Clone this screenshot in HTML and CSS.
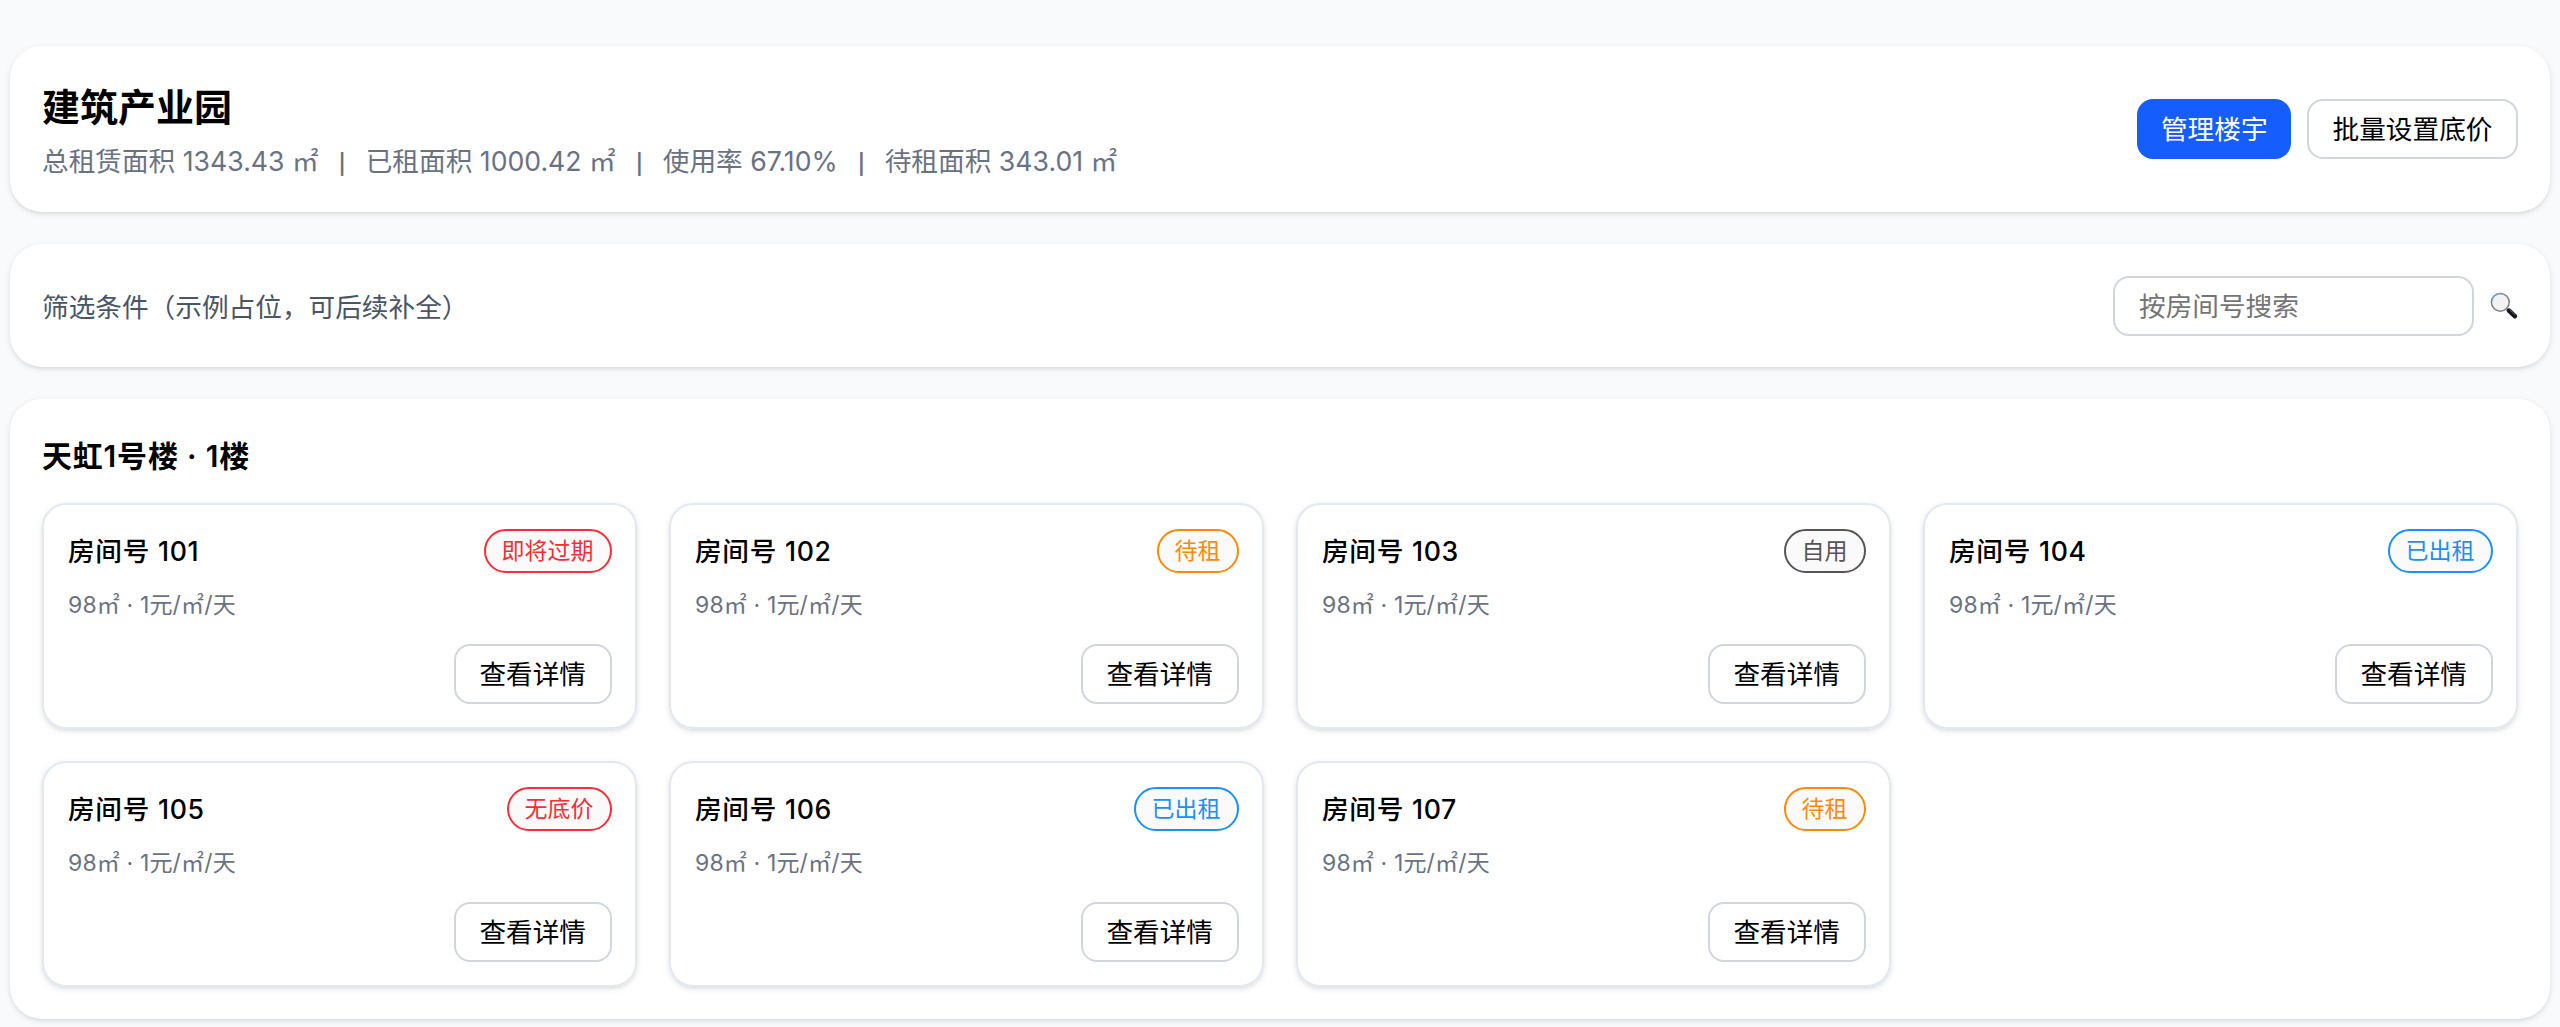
FILE: index.html
```html
<!DOCTYPE html>
<html lang="zh-CN">
<head>
  <meta charset="UTF-8">
  <meta name="viewport" content="width=device-width, initial-scale=1.0">
  <title>建筑产业园</title>
  <link rel="stylesheet" href="styles.css">
</head>
<body>
  <div class="page">

    <!-- 园区概览 -->
    <header class="panel summary">
      <div>
        <h1>建筑产业园</h1>
        <p class="stats">
          <span>总租赁面积 1343.43 ㎡</span><span class="sep">|</span><span>已租面积 1000.42 ㎡</span><span class="sep">|</span><span>使用率 67.10%</span><span class="sep">|</span><span>待租面积 343.01 ㎡</span>
        </p>
      </div>
      <div class="actions">
        <button class="btn primary">管理楼宇</button>
        <button class="btn">批量设置底价</button>
      </div>
    </header>

    <!-- 筛选 -->
    <section class="panel filter">
      <span class="filter-text">筛选条件（示例占位，可后续补全）</span>
      <div class="search">
        <input type="text" placeholder="按房间号搜索">
        <svg class="icon" viewBox="0 0 28 28">
          <path d="M17 17l3 3" stroke="#777" stroke-width="2.4"/>
          <path d="M19 18.6l5.8 5.6" stroke="#15191d" stroke-width="4.6" stroke-linecap="round"/>
          <path d="M19.6 17.6l5.8 5.4" stroke="#59626a" stroke-width="1"/>
          <circle cx="10.3" cy="10.3" r="8.9" fill="#f2f2f2" stroke="#7c8287" stroke-width="1.5"/>
          <path d="M1.9 8.5a8.8 8.8 0 0 1 8.4-7.1" fill="none" stroke="#79a5cc" stroke-width="1.3"/>
        </svg>
      </div>
    </section>

    <!-- 房间列表 -->
    <section class="panel floor">
      <h2>天虹1号楼 · 1楼</h2>
      <div class="rooms">
        <div class="room">
          <div class="room-head"><h3>房间号 101</h3><span class="tag red">即将过期</span></div>
          <p class="info">98㎡ · 1元/㎡/天</p>
          <button class="btn detail">查看详情</button>
        </div>
        <div class="room">
          <div class="room-head"><h3>房间号 102</h3><span class="tag orange">待租</span></div>
          <p class="info">98㎡ · 1元/㎡/天</p>
          <button class="btn detail">查看详情</button>
        </div>
        <div class="room">
          <div class="room-head"><h3>房间号 103</h3><span class="tag gray">自用</span></div>
          <p class="info">98㎡ · 1元/㎡/天</p>
          <button class="btn detail">查看详情</button>
        </div>
        <div class="room">
          <div class="room-head"><h3>房间号 104</h3><span class="tag blue">已出租</span></div>
          <p class="info">98㎡ · 1元/㎡/天</p>
          <button class="btn detail">查看详情</button>
        </div>
        <div class="room">
          <div class="room-head"><h3>房间号 105</h3><span class="tag red">无底价</span></div>
          <p class="info">98㎡ · 1元/㎡/天</p>
          <button class="btn detail">查看详情</button>
        </div>
        <div class="room">
          <div class="room-head"><h3>房间号 106</h3><span class="tag blue">已出租</span></div>
          <p class="info">98㎡ · 1元/㎡/天</p>
          <button class="btn detail">查看详情</button>
        </div>
        <div class="room">
          <div class="room-head"><h3>房间号 107</h3><span class="tag orange">待租</span></div>
          <p class="info">98㎡ · 1元/㎡/天</p>
          <button class="btn detail">查看详情</button>
        </div>
      </div>
    </section>

  </div>
</body>
</html>
```
FILE: styles.css
```css
* {
  box-sizing: border-box;
}

body {
  margin: 0;
  background-color: #f9fafb;
  color: #000;
  font-family: Inter, "Noto Sans CJK SC", sans-serif;
  font-size: 26.67px;
}

h1, h2, h3, p {
  margin: 0;
}

.page {
  display: flex;
  flex-direction: column;
  gap: 32px;
  padding: 46px 10px 8px;
}

.panel {
  background-color: #fff;
  border-radius: 32px;
  padding: 32px;
  box-shadow: 0 2px 6px rgba(0,0,0,0.1), 0 2px 4px -2px rgba(0,0,0,0.1);
}

.summary, .filter {
  display: flex;
  justify-content: space-between;
  align-items: center;
}

.summary {
  height: 166px;
}

.filter {
  height: 123px;
}

h1 {
  font-size: 38px;
  line-height: 56px;
  font-weight: 700;
  padding-top: 4px;
}

.stats {
  color: #6a7282;
  line-height: 40px;
  margin-top: 6px;
  white-space: nowrap;
}

.sep {
  display: inline-block;
  width: 47px;
  font-size: 20px;
  font-weight: 600;
  text-align: center;
}

.actions {
  display: flex;
  gap: 16px;
}

.btn {
  height: 60px;
  padding: 0 23.5px;
  border: 2px solid #d1d5dc;
  border-radius: 16px;
  background-color: #fff;
  color: #000;
  font-family: inherit;
  font-size: 26.67px;
  line-height: 40px;
}

.primary {
  border: none;
  background-color: #155dfc;
  color: #fff;
}

.filter-text {
  color: #4a5565;
}

.search {
  display: flex;
  align-items: center;
  gap: 16px;
}

.search input {
  width: 361px;
  height: 60px;
  padding: 0 24px;
  border: 2px solid #d1d5dc;
  border-radius: 16px;
  font-family: inherit;
  font-size: 26.67px;
}

.search input::placeholder {
  color: #757575;
}

.icon {
  width: 28px;
  height: 28px;
}

.floor {
  height: 620px;
}

h2 {
  font-size: 30px;
  line-height: 48px;
  font-weight: 600;
  letter-spacing: 0.8px;
  padding-top: 1px;
  margin-bottom: 23px;
}

.rooms {
  display: grid;
  grid-template-columns: repeat(4, 1fr);
  gap: 32px;
}

.room {
  display: flex;
  flex-direction: column;
  height: 226px;
  padding: 24px 23.5px 23.5px 24px;
  border: 2px solid #e2e8f0;
  border-radius: 24px;
  box-shadow: 0 2px 6px rgba(0,0,0,0.1), 0 2px 4px -2px rgba(0,0,0,0.1);
}

.room-head {
  display: flex;
  justify-content: space-between;
  align-items: center;
}

h3 {
  font-size: 26.67px;
  line-height: 40px;
  font-weight: 500;
  letter-spacing: 0.7px;
}

.tag {
  height: 44px;
  padding: 0 16px;
  border: 2px solid;
  border-radius: 22px;
  background-color: #fafafa;
  font-size: 23px;
  line-height: 40px;
}

.red {
  color: #fb2c36;
}

.orange {
  color: #ff8904;
}

.gray {
  color: #555;
}

.blue {
  color: #1890ff;
}

.info {
  color: #6a7282;
  font-size: 23px;
  line-height: 32px;
  letter-spacing: 0.15px;
  margin-top: 16px;
}

.detail {
  align-self: flex-end;
  margin-top: auto;
}
```
